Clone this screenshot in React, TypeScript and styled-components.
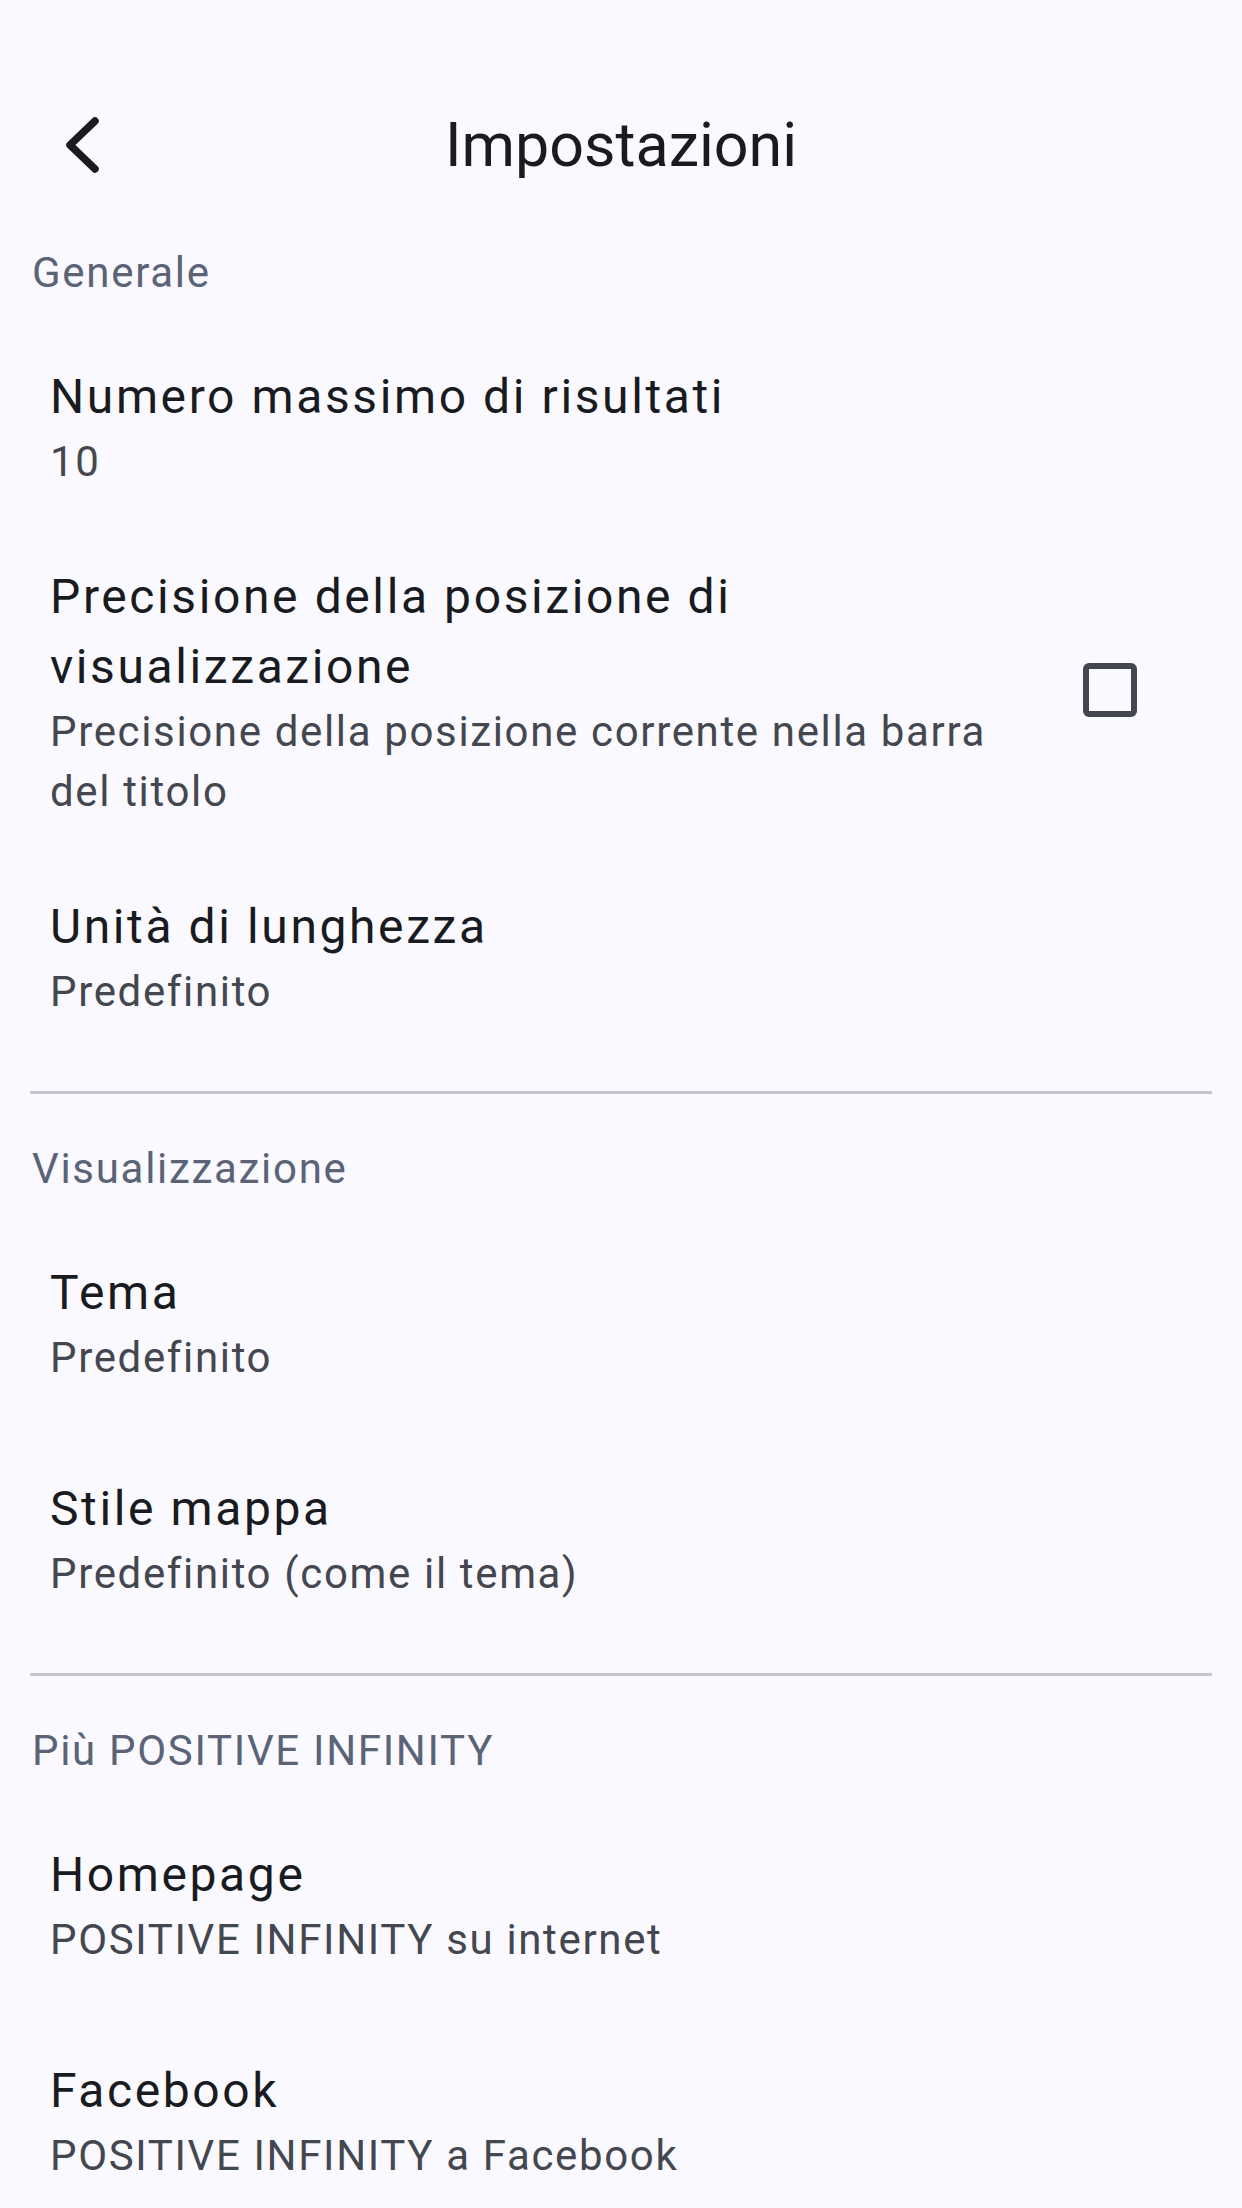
import React from "react";
import styled, { createGlobalStyle } from "styled-components";

const GlobalStyle = createGlobalStyle`
  html, body {
    margin: 0;
    padding: 0;
    background: #f9f9ff;
  }
  body {
    font-family: Roboto, "Noto Sans", "Liberation Sans", sans-serif;
    -webkit-font-smoothing: antialiased;
  }
`;

const Screen = styled.div`
  width: 1242px;
  min-height: 2208px;
  background: #f9f9ff;
  display: flex;
  flex-direction: column;
  overflow: hidden;
`;

const AppBar = styled.header`
  height: 230px;
  padding-top: 60px;
  box-sizing: border-box;
  display: grid;
  grid-template-columns: 1fr auto 1fr;
  align-items: center;
`;

const BackButton = styled.button`
  justify-self: start;
  margin-left: 56px;
  width: 56px;
  height: 72px;
  padding: 0;
  border: none;
  background: transparent;
  display: flex;
  align-items: center;
  justify-content: center;
  cursor: pointer;
`;

const Title = styled.h1`
  margin: 0;
  font-family: Roboto, "Noto Sans", sans-serif;
  font-weight: 400;
  font-size: 61px;
  line-height: 80px;
  color: #1a1b20;
  letter-spacing: 0;
`;

const Section = styled.section<{ $itemGap: number }>`
  display: flex;
  flex-direction: column;
  gap: ${(p) => p.$itemGap}px;
`;

const SectionHeader = styled.h2`
  margin: 0 0 24px 0;
  padding: 13px 32px 0;
  height: 60px;
  font-weight: 400;
  font-size: 42px;
  line-height: 60px;
  letter-spacing: 1.7px;
  color: #5b6376;
  box-sizing: content-box;
`;

const Item = styled.div`
  display: flex;
  align-items: center;
  padding: 35px 105px 35px 50px;
`;

const ItemText = styled.div`
  flex: 1;
  min-width: 0;
  display: flex;
  flex-direction: column;
`;

const ItemTitle = styled.div`
  font-size: 48px;
  line-height: 70px;
  letter-spacing: 2.6px;
  color: #1a1b20;
`;

const ItemSummary = styled.div`
  font-size: 42px;
  line-height: 60px;
  letter-spacing: 1.65px;
  color: #44474e;
`;

const CheckBox = styled.span`
  flex: none;
  width: 54px;
  height: 54px;
  margin-left: 40px;
  margin-top: -4px;
  box-sizing: border-box;
  border: 6px solid #44474e;
  border-radius: 6px;
`;

const Divider = styled.hr`
  margin: 34px 30px 32px;
  height: 3px;
  border: none;
  background: #c5c6d0;
`;

type Pref = { title: string; summary: string; checkbox?: boolean };

const sections: { header: string; gap: number; items: Pref[]; divider: boolean }[] = [
  {
    header: "Generale",
    gap: 0,
    divider: true,
    items: [
      { title: "Numero massimo di risultati", summary: "10" },
      {
        title: "Precisione della posizione di visualizzazione",
        summary: "Precisione della posizione corrente nella barra del titolo",
        checkbox: true,
      },
      { title: "Unità di lunghezza", summary: "Predefinito" },
    ],
  },
  {
    header: "Visualizzazione",
    gap: 16,
    divider: true,
    items: [
      { title: "Tema", summary: "Predefinito" },
      { title: "Stile mappa", summary: "Predefinito (come il tema)" },
    ],
  },
  {
    header: "Più POSITIVE INFINITY",
    gap: 16,
    divider: false,
    items: [
      { title: "Homepage", summary: "POSITIVE INFINITY su internet" },
      { title: "Facebook", summary: "POSITIVE INFINITY a Facebook" },
    ],
  },
];

const BackIcon = () => (
  <svg width="40" height="64" viewBox="0 0 40 64" fill="none">
    <polyline
      points="31,8 6,32 31,56"
      stroke="#1a1b20"
      strokeWidth="7.5"
      strokeLinecap="round"
      strokeLinejoin="round"
    />
  </svg>
);

export default function App() {
  return (
    <Screen>
      <GlobalStyle />
      <AppBar>
        <BackButton aria-label="Indietro">
          <BackIcon />
        </BackButton>
        <Title>Impostazioni</Title>
        <div />
      </AppBar>
      {sections.map((s) => (
        <React.Fragment key={s.header}>
          <SectionHeader>{s.header}</SectionHeader>
          <Section $itemGap={s.gap}>
            {s.items.map((it) => (
              <Item key={it.title}>
                <ItemText>
                  <ItemTitle>{it.title}</ItemTitle>
                  <ItemSummary>{it.summary}</ItemSummary>
                </ItemText>
                {it.checkbox && <CheckBox />}
              </Item>
            ))}
          </Section>
          {s.divider && <Divider />}
        </React.Fragment>
      ))}
    </Screen>
  );
}
